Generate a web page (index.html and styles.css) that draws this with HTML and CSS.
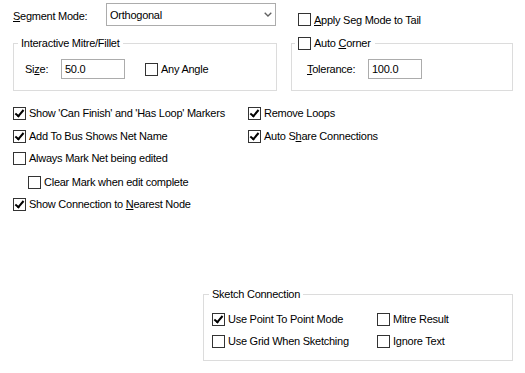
FILE: index.html
```html
<!DOCTYPE html>
<html lang="en">

<head>
    <meta charset="UTF-8">
    <meta name="viewport" content="width=device-width, initial-scale=1.0">
    <title>Sketch Options</title>
    <link rel="stylesheet" href="styles.css">
</head>

<body>
    <div class="dialog">
        <div class="top">
            <div class="col">
                <div class="mode-row">
                    <span class="mode-label"><u>S</u>egment Mode:</span>
                    <div class="select">
                        <span>Orthogonal</span>
                        <svg class="chevron" width="8" height="5" viewBox="0 0 8 5">
                            <path d="M0.7 0.7 L4 4 L7.3 0.7" fill="none" stroke="#606060" stroke-width="1.3" />
                        </svg>
                    </div>
                </div>
                <fieldset class="group mitre">
                    <legend>Interactive Mitre/Fillet</legend>
                    <div class="field-row">
                        <span class="size-label">Si<u>z</u>e:</span>
                        <div class="textbox size-box">50.0</div>
                        <label class="check any-angle"><span class="box"></span>Any Angle</label>
                    </div>
                </fieldset>
            </div>
            <div class="col">
                <div class="apply-row">
                    <label class="check"><span class="box"></span><span><u>A</u>pply Seg Mode to Tail</span></label>
                </div>
                <fieldset class="group corner">
                    <legend><label class="check"><span class="box"></span><span>Auto <u>C</u>orner</span></label></legend>
                    <div class="field-row tol-row">
                        <span class="tol-label"><u>T</u>olerance:</span>
                        <div class="textbox tol-box">100.0</div>
                    </div>
                </fieldset>
            </div>
        </div>

        <div class="options">
            <div class="opt-col left">
                <div class="row"><label class="check"><span class="box checked"></span>Show 'Can Finish' and 'Has Loop' Markers</label></div>
                <div class="row gap1"><label class="check"><span class="box checked"></span>Add To Bus Shows Net Name</label></div>
                <div class="row"><label class="check"><span class="box"></span>Always Mark Net being edited</label></div>
                <div class="row indent gap2"><label class="check"><span class="box"></span>Clear Mark when edit complete</label></div>
                <div class="row"><label class="check"><span class="box checked"></span><span>Show Connection to <u>N</u>earest Node</span></label></div>
            </div>
            <div class="opt-col">
                <div class="row"><label class="check"><span class="box checked"></span>Remove Loops</label></div>
                <div class="row gap1"><label class="check"><span class="box checked"></span><span>Auto S<u>h</u>are Connections</span></label></div>
            </div>
        </div>

        <fieldset class="group sketch">
            <legend>Sketch Connection</legend>
            <div class="sketch-grid">
                <label class="check"><span class="box checked"></span>Use Point To Point Mode</label>
                <label class="check"><span class="box"></span>Mitre Result</label>
                <label class="check"><span class="box"></span>Use Grid When Sketching</label>
                <label class="check"><span class="box"></span>Ignore Text</label>
            </div>
        </fieldset>
    </div>
</body>

</html>
```

FILE: styles.css
```css
body {
    margin: 0;
    font-family: "Liberation Sans", Arial, sans-serif;
    font-size: 11px;
    letter-spacing: -0.25px;
    color: #000;
    background: #fff;
}

.dialog {
    width: 525px;
    height: 373px;
    padding: 0 12px 0 13px;
    box-sizing: border-box;
}

.top {
    display: grid;
    grid-template-columns: 264px 222px;
    column-gap: 14px;
    padding-top: 3px;
}

.mode-row {
    display: flex;
    align-items: center;
    height: 23px;
}

.mode-label {
    width: 93px;
    padding-top: 3px;
}

.select {
    width: 170px;
    height: 23px;
    box-sizing: border-box;
    border: 1px solid #acacac;
    display: flex;
    align-items: center;
    justify-content: space-between;
    padding: 0 3px 0 3px;
}

.group {
    margin: 0;
    padding: 0;
    border: 1px solid #dcdcdc;
    min-width: 0;
}

legend {
    padding: 0 3px;
    line-height: 14px;
}

.mitre,
.corner {
    margin-top: 10px;
}

.mitre legend {
    margin-left: 4px;
}

.corner legend {
    margin-left: 3px;
    padding: 0 4px 0 3px;
    height: 14px;
}

.corner legend .check {
    display: flex;
    height: 14px;
}

.field-row {
    display: flex;
    align-items: center;
    height: 20px;
    padding: 9px 0 11px 11px;
}

.size-label {
    width: 36px;
}

.textbox {
    height: 20px;
    box-sizing: border-box;
    border: 1px solid #acacac;
    padding: 0 3px;
    display: flex;
    align-items: center;
}

.size-box {
    width: 64px;
}

.any-angle {
    margin-left: 20px;
}

.tol-row {
    padding-left: 15px;
}

.tol-label {
    width: 61px;
}

.tol-box {
    width: 54px;
}

.apply-row {
    height: 23px;
    display: flex;
    align-items: flex-end;
    padding-left: 7px;
}

.check {
    display: inline-flex;
    align-items: center;
    gap: 3px;
    white-space: nowrap;
}

.box {
    width: 13px;
    height: 13px;
    box-sizing: border-box;
    border: 1px solid #333;
    background: #fff;
    flex: none;
    position: relative;
}

.box.checked::after {
    content: "";
    position: absolute;
    left: 3px;
    top: 0px;
    width: 3px;
    height: 7px;
    border: solid #000;
    border-width: 0 2px 2px 0;
    transform: rotate(40deg);
}

.options {
    display: flex;
    margin-top: 11px;
}

.opt-col.left {
    width: 235px;
}

.row {
    height: 22px;
    display: flex;
    align-items: center;
}

.row.gap1 {
    margin-top: 1px;
}

.row.gap2 {
    margin-top: 2px;
}

.row.indent {
    padding-left: 15px;
}

.sketch {
    margin: 72px 0 0 190px;
    width: 310px;
    box-sizing: border-box;
}

.sketch legend {
    margin-left: 5px;
}

.sketch-grid {
    display: grid;
    grid-template-columns: 165px auto;
    grid-auto-rows: 22px;
    align-items: center;
    padding: 7px 0 8px 8px;
}
```
